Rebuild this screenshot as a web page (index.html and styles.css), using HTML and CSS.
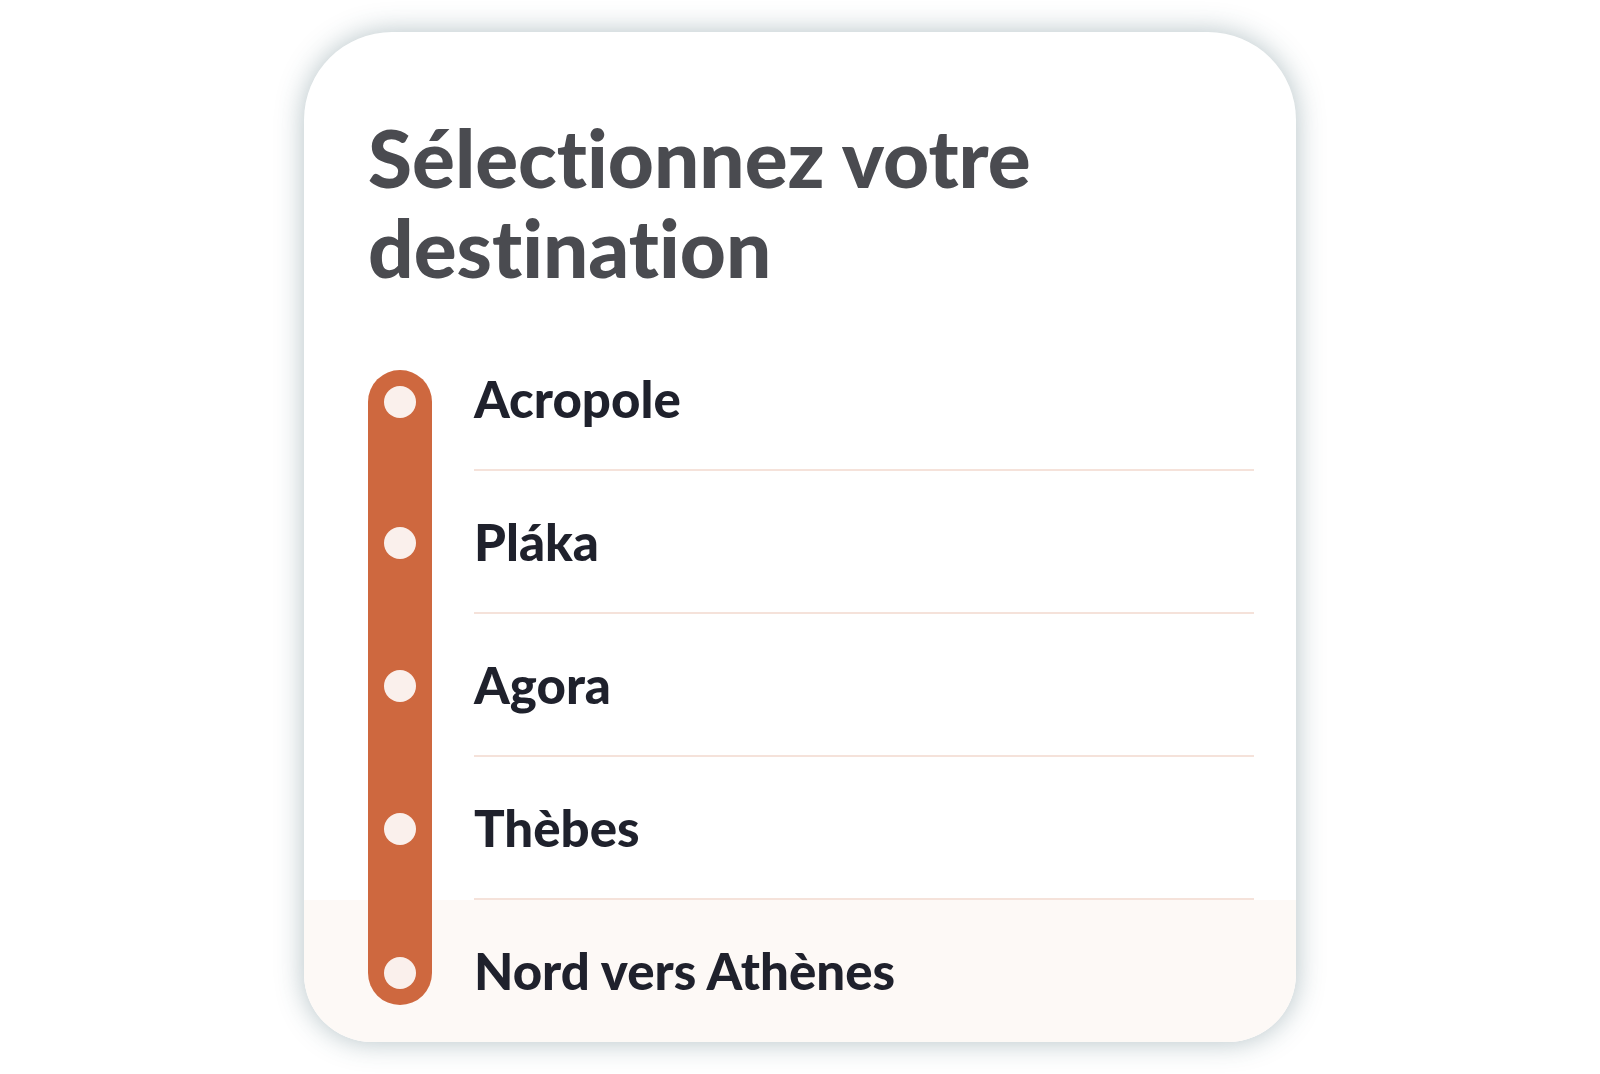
FILE: index.html
```html
<!DOCTYPE html>
<html lang="fr">
<head>
  <meta charset="UTF-8" />
  <meta name="viewport" content="width=device-width, initial-scale=1.0" />
  <title>Sélectionnez votre destination</title>
  <link rel="stylesheet" href="styles.css">
</head>
<body>
  <main class="card">
    <h1>Sélectionnez votre destination</h1>

    <ul class="stops">
      <li>
        <button type="button" class="stop">
          <span class="rail"><span class="dot"></span></span>
          <span class="name">Acropole</span>
        </button>
      </li>
      <li>
        <button type="button" class="stop">
          <span class="rail"><span class="dot"></span></span>
          <span class="name">Pláka</span>
        </button>
      </li>
      <li>
        <button type="button" class="stop">
          <span class="rail"><span class="dot"></span></span>
          <span class="name">Agora</span>
        </button>
      </li>
      <li>
        <button type="button" class="stop">
          <span class="rail"><span class="dot"></span></span>
          <span class="name">Thèbes</span>
        </button>
      </li>
      <li>
        <button type="button" class="stop">
          <span class="rail"><span class="dot"></span></span>
          <span class="name">Nord vers Athènes</span>
        </button>
      </li>
    </ul>
  </main>
</body>
</html>
```
FILE: styles.css
```css
* {
  box-sizing: border-box;
}
body {
  margin: 0;
  padding: 32px 16px;
  background: #fff;
  font-family: Lato, 'Open Sans', sans-serif;
  font-variant-ligatures: none;
}
.card {
  width: 100%;
  max-width: 992px;
  margin: 0 auto;
  background: #fff;
  border-radius: 88px 88px 68px 68px;
  box-shadow: 0 0 28px rgba(44, 83, 94, 0.36);
  overflow: hidden;
}
h1 {
  margin: 0;
  padding: 80px 64px 36px;
  font-size: 80px;
  font-weight: 900;
  line-height: 90px;
  color: #4a4b50;
}
.stops {
  list-style: none;
  margin: 0;
  padding: 0;
}
.stop {
  display: flex;
  width: 100%;
  min-height: 143px;
  padding: 0 42px 0 64px;
  gap: 42px;
  border: 0;
  background: none;
  font: inherit;
  text-align: left;
  cursor: pointer;
}
.rail {
  display: flex;
  align-items: center;
  justify-content: center;
  align-self: stretch;
  width: 64px;
  background: #ce683f;
}
.dot {
  width: 32px;
  height: 32px;
  border-radius: 50%;
  background: #faf0ec;
}
.name {
  display: flex;
  flex: 1;
  align-items: center;
  align-self: stretch;
  border-bottom: 2px solid #f5e2da;
  font-size: 51px;
  font-weight: 900;
  line-height: 56px;
  color: #1f212c;
}

/* ends of the line */
.stops li:first-child .rail {
  align-items: flex-start;
  margin-top: 42px;
  padding-top: 16px;
  border-radius: 32px 32px 0 0;
}
.stops li:last-child .rail {
  align-items: flex-end;
  margin-bottom: 37px;
  padding-bottom: 16px;
  border-radius: 0 0 32px 32px;
}
.stops li:last-child .name {
  border-bottom: 0;
}
.stops li:last-child .stop {
  min-height: 142px;
  background: #fdf9f6;
}
```
